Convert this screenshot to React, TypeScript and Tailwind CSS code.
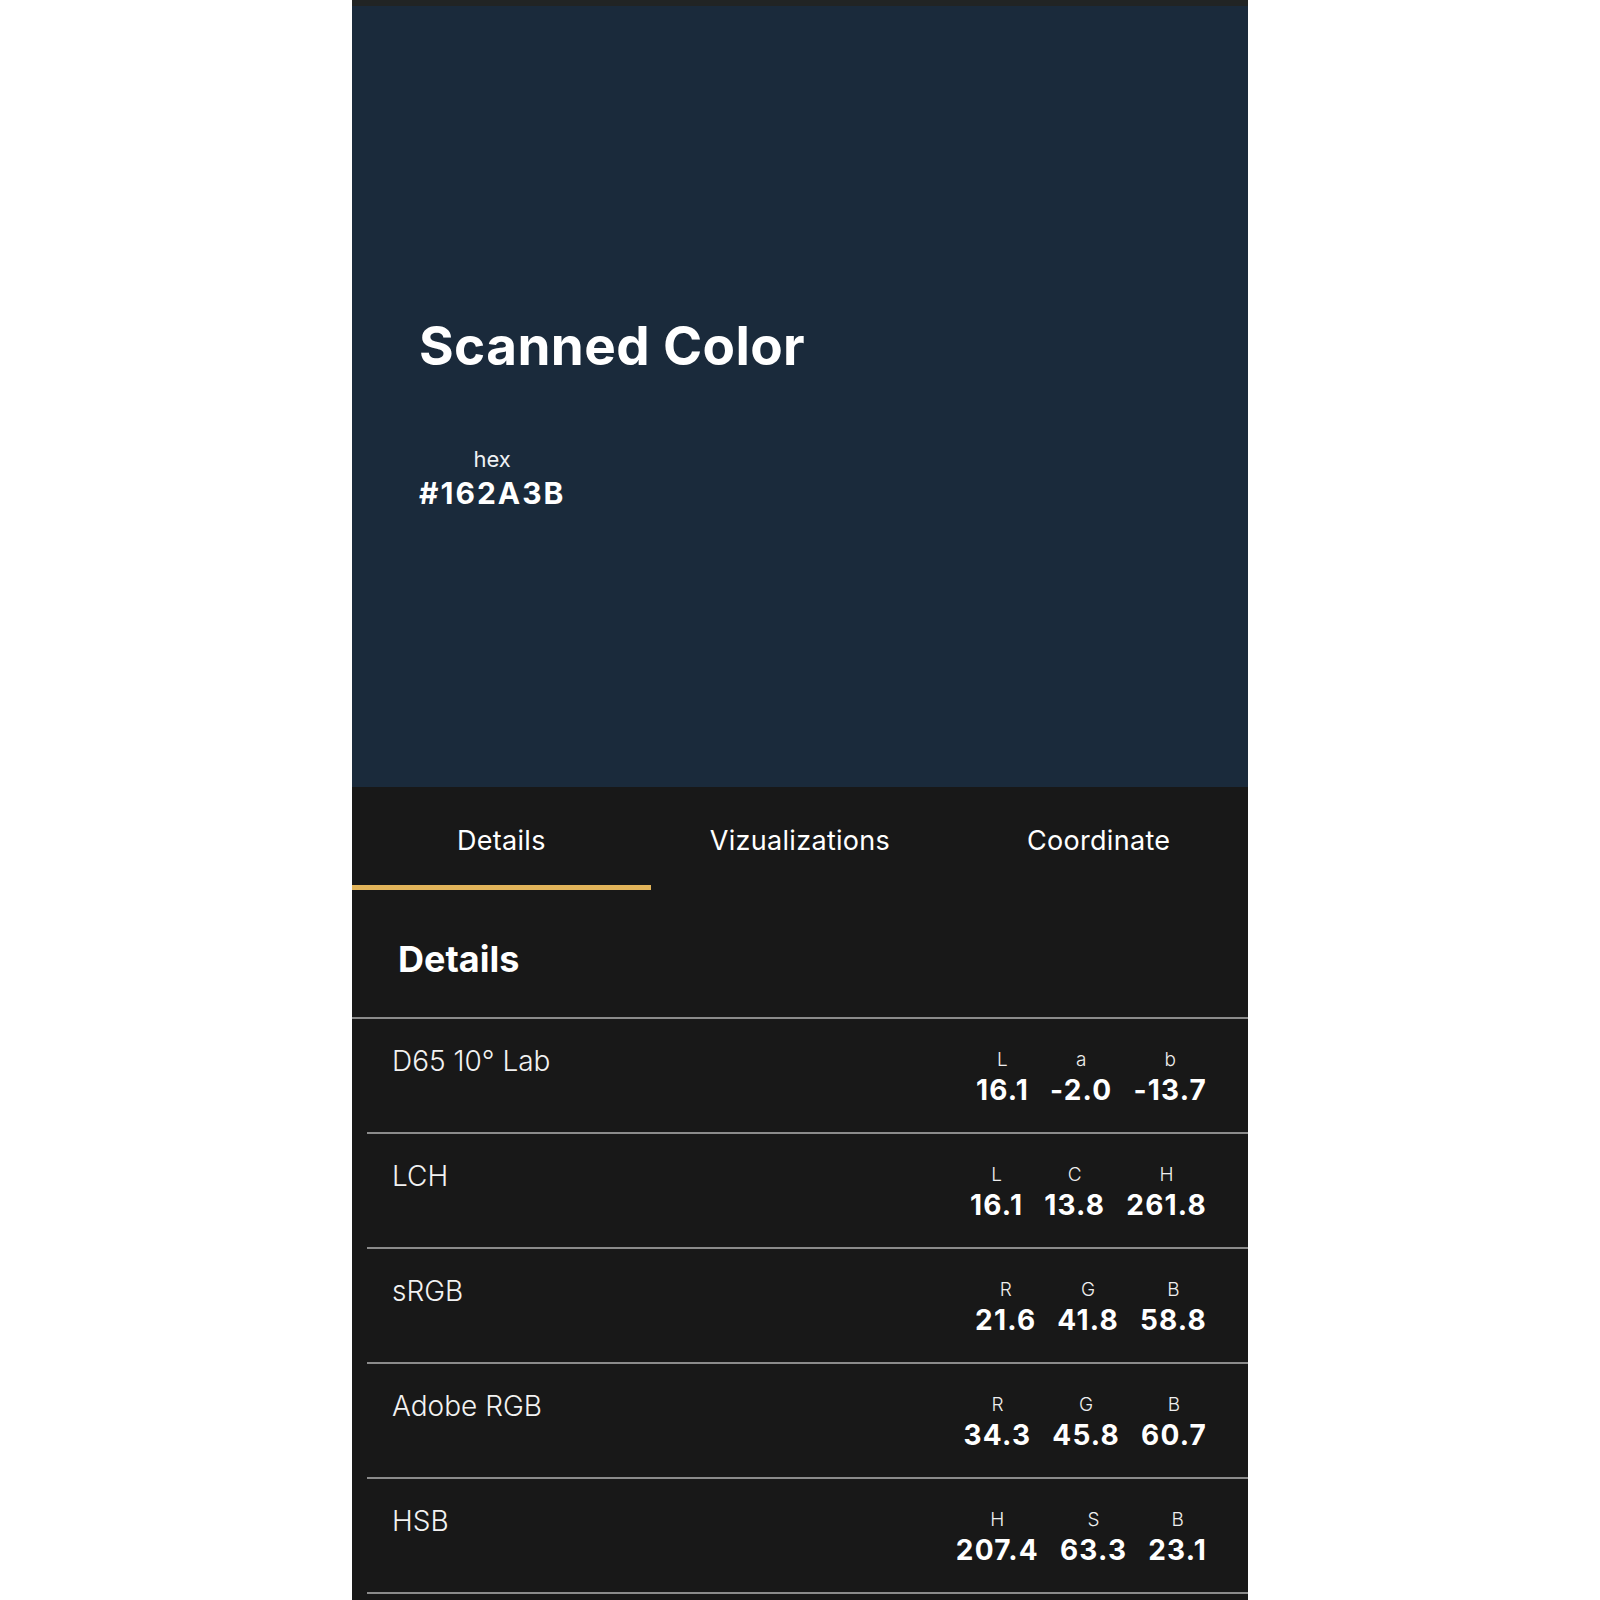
import React from 'react';

type Channel = { label: string; value: string };
type SpaceRow = { name: string; channels: Channel[] };

const rows: SpaceRow[] = [
  {
    name: 'D65 10° Lab',
    channels: [
      { label: 'L', value: '16.1' },
      { label: 'a', value: '-2.0' },
      { label: 'b', value: '-13.7' },
    ],
  },
  {
    name: 'LCH',
    channels: [
      { label: 'L', value: '16.1' },
      { label: 'C', value: '13.8' },
      { label: 'H', value: '261.8' },
    ],
  },
  {
    name: 'sRGB',
    channels: [
      { label: 'R', value: '21.6' },
      { label: 'G', value: '41.8' },
      { label: 'B', value: '58.8' },
    ],
  },
  {
    name: 'Adobe RGB',
    channels: [
      { label: 'R', value: '34.3' },
      { label: 'G', value: '45.8' },
      { label: 'B', value: '60.7' },
    ],
  },
  {
    name: 'HSB',
    channels: [
      { label: 'H', value: '207.4' },
      { label: 'S', value: '63.3' },
      { label: 'B', value: '23.1' },
    ],
  },
];

const tabs = ['Details', 'Vizualizations', 'Coordinate'];

function DetailRow({ row }: { row: SpaceRow }) {
  return (
    <div>
      <div className="h-[113px] flex items-start justify-between pl-[40px] pr-[41px] pt-[28px]">
        <span className="text-[28px] leading-none font-light text-[#f2f2f2]">{row.name}</span>
        <div className="mt-[3px] flex gap-[21px]">
          {row.channels.map((c) => (
            <div key={c.label + c.value} className="flex flex-col items-center">
              <span className="text-[19px] leading-none font-light text-[#eeeeee]">{c.label}</span>
              <span className="mt-[7px] text-[28px] leading-none font-bold text-white tracking-[1.2px]">
                {c.value}
              </span>
            </div>
          ))}
        </div>
      </div>
      <div className="ml-[15px] h-[2px] bg-[#8b8b8b]" />
    </div>
  );
}

export default function App() {
  return (
    <div
      className="min-h-screen w-full bg-white flex justify-center"
      style={{ fontFamily: 'Inter, "Noto Sans", "Liberation Sans", sans-serif' }}
    >
      <div className="w-[896px] bg-[#181818] pb-[40px]">
        {/* status strip */}
        <div className="h-[6px] bg-[#212424]" />

        {/* Swatch */}
        <div className="h-[781px] bg-[#1a2a3b] pl-[67px] pt-[314px]">
          <h1 className="text-[53px] leading-none font-bold text-white tracking-[0.4px]">Scanned Color</h1>
          <div className="mt-[75px] inline-flex flex-col items-center">
            <span className="text-[22px] leading-none text-[#eef1f4]">hex</span>
            <span className="mt-[8px] text-[30px] leading-none font-bold text-white tracking-[2px]">#162A3B</span>
          </div>
        </div>

        {/* Tabs */}
        <div className="grid grid-cols-3">
          {tabs.map((t, i) => (
            <button
              key={t}
              type="button"
              className={`h-[103px] pt-[40px] flex justify-center items-start border-b-[5px] ${
                i === 0 ? 'border-[#e2b45a]' : 'border-transparent'
              }`}
            >
              <span className="text-[27px] leading-none text-white tracking-[0.3px]">{t}</span>
            </button>
          ))}
        </div>

        {/* Details */}
        <div className="pl-[46px] pt-[51px] pb-[40px]">
          <h2 className="text-[36px] leading-none font-bold text-white">Details</h2>
        </div>
        <div className="h-[2px] bg-[#8b8b8b]" />

        {rows.map((r) => (
          <DetailRow key={r.name} row={r} />
        ))}
      </div>
    </div>
  );
}
